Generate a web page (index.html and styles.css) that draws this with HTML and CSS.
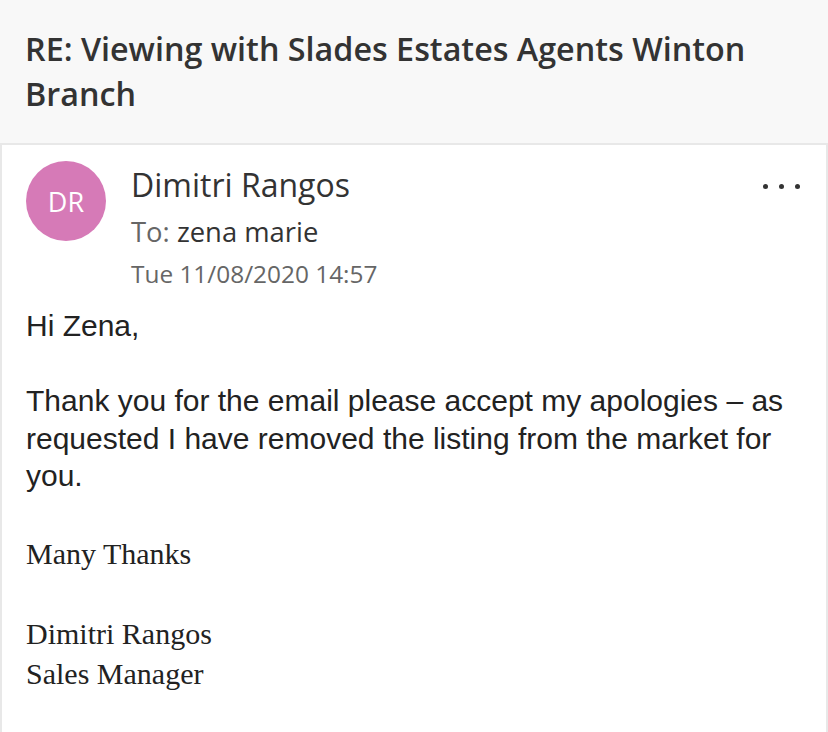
FILE: index.html
```html
<!DOCTYPE html>
<html lang="en">
<head>
<meta charset="utf-8">
<title>RE: Viewing with Slades Estates Agents Winton Branch</title>
<link rel="stylesheet" href="styles.css">
</head>
<body>
<div class="page">
  <header class="subject">
    <h1 class="subject-title">RE: Viewing with Slades Estates Agents Winton Branch</h1>
  </header>
  <article class="card">
    <div class="msg-head">
      <div class="avatar">DR</div>
      <div class="meta">
        <div class="sender">Dimitri Rangos</div>
        <div class="to"><span class="to-label">To:</span> zena marie</div>
        <div class="date">Tue 11/08/2020 14:57</div>
      </div>
      <button class="more" aria-label="More actions"><span></span><span></span><span></span></button>
    </div>
    <div class="body">
      <p class="sans">Hi Zena,</p>
      <p class="sans">Thank you for the email please accept my apologies – as requested I have removed the listing from the market for you.</p>
      <p class="serif">Many Thanks</p>
      <p class="serif">Dimitri Rangos<br>Sales Manager</p>
    </div>
  </article>
</div>
</body>
</html>
```
FILE: styles.css
```css
html, body {
  margin: 0;
  padding: 0;
  background: #f8f8f8;
}
.page {
  width: 828px;
  height: 732px;
  overflow: hidden;
  display: flex;
  flex-direction: column;
}
.subject {
  padding: 26px 40px 27px 25px;
  background: #f8f8f8;
}
.subject-title {
  margin: 0;
  font-family: "Open Sans", "Noto Sans", sans-serif;
  font-weight: 600;
  font-size: 32.3px;
  line-height: 45px;
  color: #333333;
}
.card {
  flex: 1;
  background: #ffffff;
  border: 2px solid #e8e8e8;
  border-bottom: none;
}
.msg-head {
  display: flex;
  align-items: flex-start;
  padding: 16px 0 0 24px;
}
.avatar {
  width: 80px;
  height: 80px;
  border-radius: 50%;
  background: #d67ab7;
  color: #ffffff;
  font-family: "Open Sans", "Noto Sans", sans-serif;
  font-size: 27px;
  display: flex;
  align-items: center;
  justify-content: center;
  flex: none;
}
.meta {
  flex: 1;
  margin-left: 25px;
  font-family: "Open Sans", "Noto Sans", sans-serif;
  color: #333333;
}
.sender {
  font-size: 32px;
  line-height: 40px;
  margin-top: 4px;
}
.to {
  font-size: 27.4px;
  line-height: 36px;
  margin-top: 9px;
}
.to-label {
  color: #666666;
}
.date {
  font-size: 24.4px;
  line-height: 32px;
  color: #666666;
  margin-top: 7.5px;
}
.more {
  display: flex;
  gap: 11px;
  background: none;
  border: none;
  padding: 0;
  margin: 22.5px 26.5px 0 0;
  cursor: pointer;
}
.more span {
  width: 5px;
  height: 5px;
  border-radius: 50%;
  background: #333333;
}
.body {
  padding: 17.5px 20px 0 24px;
  color: #222222;
}
.body p {
  margin: 0;
}
.sans {
  font-family: "Liberation Sans", Arial, sans-serif;
  font-size: 30px;
  line-height: 37.5px;
}
.body .sans + .sans {
  margin-top: 37.5px;
}
.body .serif {
  font-family: "Liberation Serif", "Times New Roman", serif;
  font-size: 30px;
  line-height: 40px;
  margin-top: 39.4px;
}
.body .serif + .serif {
  margin-top: 40px;
}
```
